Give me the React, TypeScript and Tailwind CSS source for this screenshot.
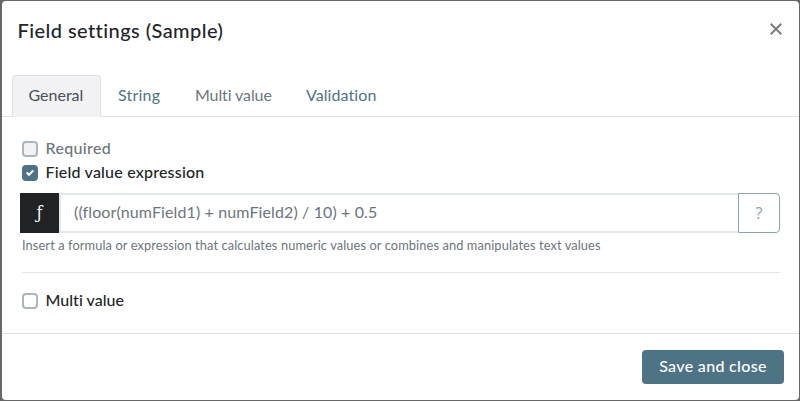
import React from "react";

type Tab = { label: string; className: string };

const tabs: Tab[] = [
  { label: "General", className: "w-[89px] pl-[15.5px] rounded-t border border-b-0 border-[#dee2e6] bg-[#f2f2f4] text-[#495057]" },
  { label: "String", className: "w-[77px] pl-[17px] tracking-[0.2px] text-[#4e7385]" },
  { label: "Multi value", className: "w-[111px] pl-[17px] tracking-[-0.1px] text-[#6c757d]" },
  { label: "Validation", className: "w-[102px] pl-[17px] tracking-[0.08px] text-[#4e7385]" },
];

type CheckboxProps = { label: string; spacing: string; checked?: boolean; disabled?: boolean };

function Checkbox({ label, spacing, checked = false, disabled = false }: CheckboxProps) {
  const box = checked
    ? "border-[#4e7385] bg-[#4e7385]"
    : disabled
      ? "border-[#adb5bd] bg-[#f2f2f4]"
      : "border-[#adb5bd] bg-white";
  return (
    <label className="flex h-6 items-center">
      <span className={`flex size-4 items-center justify-center rounded border-2 ${box}`}>
        {checked && (
          <svg viewBox="0 0 8 8" className="size-2" fill="#fff">
            <path d="M6.564.75l-3.59 3.612-1.538-1.55L0 4.26l2.974 2.99L8 2.193z" />
          </svg>
        )}
      </span>
      <span className={`mb-0.5 ml-[7.5px] font-medium ${spacing} ${disabled ? "text-[#6c757d]" : "text-[#212529]"}`}>{label}</span>
    </label>
  );
}

export default function App() {
  return (
    <div className="h-[401px] w-[800px] bg-[#686668] pt-px pr-px pb-px pl-0.5 font-['Lato','Open_Sans',sans-serif] text-base leading-6 [font-variant-ligatures:none]">
      <div className="flex h-[399px] w-full flex-col overflow-hidden rounded bg-white">
        <header className="flex h-[74px] justify-between pt-4 pr-[17px] pl-[15.5px]">
          <h1 className="-mt-px h-7 text-xl leading-7 font-medium tracking-[0.43px] whitespace-nowrap text-[#212529]">Field settings (Sample)</h1>
          <svg viewBox="0 0 12 12" className="mt-[6px] size-3" stroke="#7c7c80" strokeWidth="2" fill="none">
            <path d="M.7.7l10.6 10.6M11.3.7L.7 11.3" />
          </svg>
        </header>
        <nav className="flex h-[42px] border-b border-[#dee2e6] pl-[10px] whitespace-nowrap">
          {tabs.map((tab) => (
            <div key={tab.label} className={`flex h-[42px] items-center ${tab.className}`}>
              <span className="mb-[3px]">{tab.label}</span>
            </div>
          ))}
        </nav>
        <main className="flex h-[216px] flex-col pt-5 pr-[19px] pl-5">
          <Checkbox label="Required" spacing="tracking-[0.35px]" disabled />
          <Checkbox label="Field value expression" spacing="tracking-[0.2px]" checked />
          <div className="mt-2 -ml-0.5 flex h-10 shrink-0">
            <div className="flex w-[39px] items-center justify-center bg-[#1f2326] font-['DejaVu_Serif',serif] text-white">ƒ</div>
            <div className="flex flex-1 items-center border-2 border-r-0 border-[#e2e7eb] pl-[13px] text-[#6c757d]">
              <span className="mb-0.5 tracking-[0.12px]">((floor(numField1) + numField2) / 10) + 0.5</span>
            </div>
            <div className="flex w-[42px] items-center justify-center rounded-r border border-[#8da2b0] text-[#8da2b0]">
              <span className="mb-px font-['Open_Sans',sans-serif]">?</span>
            </div>
          </div>
          <p className="mt-[3px] h-[18px] text-[12.8px] leading-[18px] tracking-[0.11px] whitespace-nowrap text-[#6c757d]">
            Insert a formula or expression that calculates numeric values or combines and manipulates text values
          </p>
          <hr className="mt-[18px] mb-4 border-[#e2e4e5]" />
          <Checkbox label="Multi value" spacing="tracking-[0.02px]" />
        </main>
        <footer className="flex h-[67px] justify-end border-t border-[#dee2e6] pt-4 pr-[15px]">
          <button className="h-[34px] w-[142px] rounded bg-[#4e7385] pb-0.5 font-medium tracking-[0.33px] whitespace-nowrap text-white">Save and close</button>
        </footer>
      </div>
    </div>
  );
}
